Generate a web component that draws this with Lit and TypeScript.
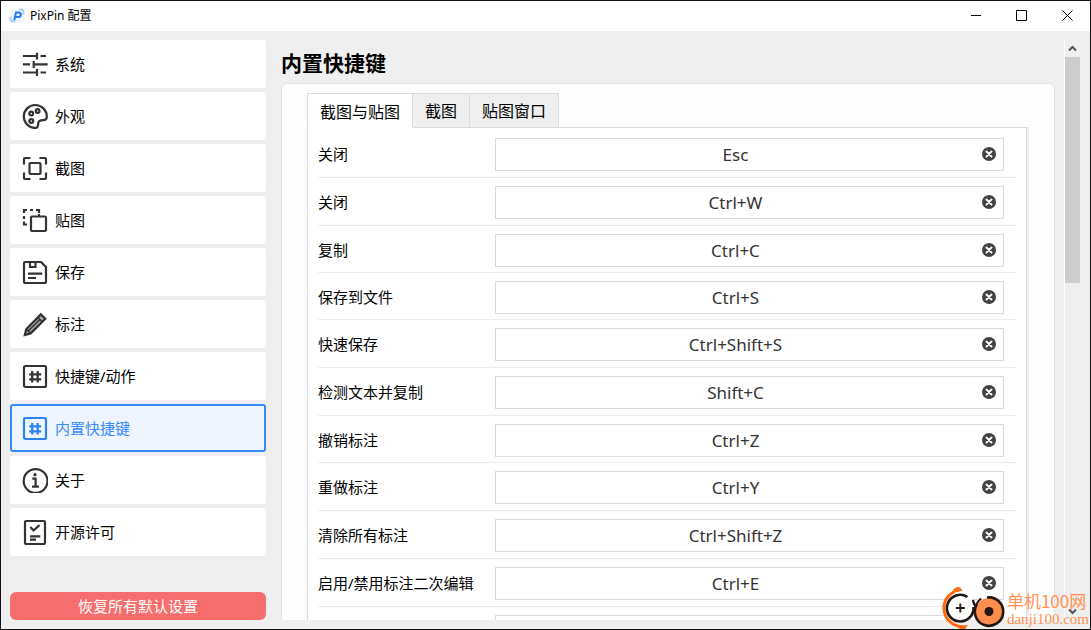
import { LitElement, html, css, svg, nothing, type TemplateResult } from "lit";
import { customElement, property, state } from "lit/decorators.js";
import { classMap } from "lit/directives/class-map.js";

const hash = svg`
  <rect x="2" y="3" width="22" height="21" rx="1.5"/>
  <path d="M10.2 8v11.5M15.7 8v11.5M7.2 11.3h12M7.2 16.4h12"/>`;

const ICONS: Record<string, TemplateResult> = {
  system: svg`<path d="M1 5h14M18.500 5h5.500M15 1.700v6.800M1 13.400h7M11.700 13.400h14M11.700 10v7M1 21.500h14M18.500 21.500h5.500M15 18v7"/>`,
  look: svg`
    <path d="M13.300 25A11.500 11.500 0 1 1 24.800 13.500c.1 2.500-.9 3.600-3.200 3.700l-2.600.1c-1.700.2-2.600 1.100-2.700 2.700l-.2 2.200c-.2 1.900-1.100 2.800-2.800 2.800z"/>
    <circle cx="9.200" cy="10.600" r="1.900"/><circle cx="15.600" cy="8" r="1.900"/><circle cx="9.300" cy="18" r="1.900"/>`,
  capture: svg`
    <path d="M8.500 3H3a1 1 0 0 0-1 1v5.500M17.500 3H23a1 1 0 0 1 1 1v5.500M8.500 24H3a1 1 0 0 1-1-1v-5.500M17.500 24H23a1 1 0 0 0 1-1v-5.500"/>
    <rect x="7.500" y="8" width="11" height="11" rx="1"/>`,
  pin: svg`
    <path d="M2 6V3h3M8 3h3M14 3h3v3M2 9v3M2 14.500v3h3M17 7v2"/>
    <rect x="9" y="9.500" width="15" height="14.500" rx="1"/>`,
  save: svg`
    <path d="M3.300 3H19l5 5v14.700a1.300 1.300 0 0 1-1.300 1.300H3.300A1.300 1.300 0 0 1 2 22.700V4.300A1.300 1.300 0 0 1 3.300 3zM8 3v5h5.500V3M6 14.700h14.200M6 19h8"/>`,
  mark: svg`
    <path fill="#aaa" d="M2.800 24l1.400-5.800L18.800 3.400l4.500 4.400L8.600 22.400z"/>
    <path stroke-width="1.600" d="M4.200 18.200l4.400 4.200M15.800 6.400l4.400 4.400M6.200 20L18 8.500"/>`,
  hotkey: hash,
  builtin: hash,
  about: svg`
    <circle cx="13.600" cy="14" r="11.900"/>
    <circle cx="13" cy="7.700" r="1.600" fill="currentColor" stroke="none"/>
    <path d="M10.300 11.700h3.300v8M10 19.700h7" />`,
  license: svg`
    <rect x="3" y="2" width="20" height="23" rx="1.200"/>
    <path d="M8.300 8l3.200 3.500 6-5.400M8 17.300h10.300M8 20.700h6"/>`,
};

const NAV: [string, string][] = [
  ["system", "系统"],
  ["look", "外观"],
  ["capture", "截图"],
  ["pin", "贴图"],
  ["save", "保存"],
  ["mark", "标注"],
  ["hotkey", "快捷键/动作"],
  ["builtin", "内置快捷键"],
  ["about", "关于"],
  ["license", "开源许可"],
];

const TABS = ["截图与贴图", "截图", "贴图窗口"];

const SHORTCUTS: [string, string][] = [
  ["关闭", "Esc"],
  ["关闭", "Ctrl+W"],
  ["复制", "Ctrl+C"],
  ["保存到文件", "Ctrl+S"],
  ["快速保存", "Ctrl+Shift+S"],
  ["检测文本并复制", "Shift+C"],
  ["撤销标注", "Ctrl+Z"],
  ["重做标注", "Ctrl+Y"],
  ["清除所有标注", "Ctrl+Shift+Z"],
  ["启用/禁用标注二次编辑", "Ctrl+E"],
  ["", ""],
];

@customElement("title-bar")
class TitleBar extends LitElement {
  static styles = css`
    :host { display: flex; align-items: center; height: 30px; background: #fff; flex: none; }
    .logo { width: 16px; height: 16px; margin: 0 5px 0 8px; }
    .name { flex: 1; font-size: 12px; line-height: 16px; color: #000; }
    .control { width: 46px; height: 30px; padding: 0 0 2px; border: 0; background: none; display: grid; place-items: center; }
    .control svg { width: 11px; height: 11px; fill: none; stroke: #000; }
  `;
  render() {
    return html`
      <svg class="logo" viewBox="0 0 16 16" fill="none" aria-hidden="true">
        <rect x="1" y="1" width="14" height="14" rx="3" fill="#f1f4fa"/>
        <path d="M10 1.500h2.500a2 2 0 0 1 2 2V7M1.500 9v2.500a2 2 0 0 0 2 2H6" stroke="#a9cdfb" stroke-width="1.800"/>
        <path d="M5.300 12.300L7 4.600h2.500a2.200 2.200 0 0 1 0 4.500H6.500" stroke="#1f7bf2" stroke-width="2"/>
      </svg>
      <span class="name">PixPin 配置</span>
      <button class="control" aria-label="最小化"><svg viewBox="0 0 11 11"><path d="M1 5.500h10"/></svg></button>
      <button class="control" aria-label="最大化"><svg viewBox="0 0 11 11"><path d="M.5.5h10v10h-10z"/></svg></button>
      <button class="control" aria-label="关闭"><svg viewBox="0 0 11 11"><path d="M.5.5l10 10M10.500.5l-10 10"/></svg></button>
    `;
  }
}

@customElement("side-nav")
class SideNav extends LitElement {
  @state() current = "builtin";
  static styles = css`
    :host { display: flex; flex-direction: column; width: 256px; flex: none; }
    .list { display: flex; flex-direction: column; gap: 4px; flex: 1; }
    .item {
      box-sizing: border-box; display: flex; align-items: center; gap: 7px; height: 48px; padding: 0 10px;
      border: 2px solid #fff; border-radius: 3px; background: #fff; color: #000;
      font: inherit; font-size: 15px; text-align: left;
    }
    .item span { padding-bottom: 2px; }
    .item.active { border-color: #3889fb; background: #eef5ff; color: #3889fb; }
    .icon { width: 26px; height: 26px; fill: none; stroke: currentColor; stroke-width: 2.2; color: #333; }
    .active .icon { color: #2a83ef; }
    .reset {
      height: 28px; padding: 0; border: 0; border-radius: 6px; background: #f66d6d; color: #fff;
      font: inherit; font-size: 15px; line-height: 28px;
    }
  `;
  render() {
    return html`
      <nav class="list">
        ${NAV.map(([id, label]) => html`
          <button class=${classMap({ item: true, active: id === this.current })}
            aria-current=${id === this.current ? "page" : nothing}
            @click=${() => (this.current = id)}>
            <svg class="icon" viewBox="0 0 26 26" aria-hidden="true">${ICONS[id]}</svg>
            <span>${label}</span>
          </button>`)}
      </nav>
      <button class="reset">恢复所有默认设置</button>
    `;
  }
}

@customElement("shortcut-row")
class ShortcutRow extends LitElement {
  @property() label = "";
  @property() keys = "";
  static styles = css`
    :host {
      box-sizing: border-box; display: flex; align-items: flex-start; height: 48px;
      padding: 8px 12px 0 0; border-bottom: 1px solid #ececec;
    }
    .label { width: 177px; flex: none; font-size: 15px; line-height: 33px; color: #000; }
    .field { box-sizing: border-box; flex: 1; display: flex; height: 33px; border: 1px solid #dadbdc; background: #fff; }
    .keys {
      flex: 1; min-width: 0; padding: 0; border: 0; outline: 0; background: none;
      font: inherit; font-size: 17px; color: #333; text-align: center;
    }
    .clear { width: 28px; padding: 0 0 2px; border: 0; background: none; display: grid; place-items: center; }
    .clear svg { width: 14px; height: 14px; }
  `;
  render() {
    return html`
      <label class="label" for="keys">${this.label}</label>
      <div class="field">
        <input class="keys" id="keys" type="text" readonly .value=${this.keys}>
        <button class="clear" aria-label="清除">
          <svg viewBox="0 0 14 14">
            <circle cx="7" cy="7" r="7" fill="#414345"/>
            <path d="M4.500 4.500l5 5M9.500 4.500l-5 5" stroke="#fff" stroke-width="1.900" stroke-linecap="round"/>
          </svg>
        </button>
      </div>
    `;
  }
}

@customElement("shortcut-page")
class ShortcutPage extends LitElement {
  @state() tab = 0;
  static styles = css`
    :host { display: flex; flex: 1; min-width: 0; min-height: 0; }
    .view { flex: 1; min-width: 0; overflow: hidden; padding-right: 9px; }
    .title { margin: 0; padding: 7px 0 4px; font-size: 21px; line-height: 32px; font-weight: 700; color: #000; }
    .card { padding: 9px 27px 9px 25px; border: 1px solid #e3e3e3; border-radius: 6px; background: #fdfdfd; }
    .tabs { display: flex; }
    .tab {
      box-sizing: border-box; height: 35px; padding: 0 12px 2px; border: 1px solid #dadbdc; border-left: 0;
      background: #efefef; color: #000; font: inherit; font-size: 16px;
    }
    .tab:first-child { border-left: 1px solid #dadbdc; }
    .tab.active { padding-bottom: 0; background: #fff; border-bottom-color: #fff; position: relative; z-index: 1; }
    .panel {
      margin-top: -1px; padding: 2px 10px 10px; border: 1px solid #dadbdc;
      background: #fff; box-shadow: 2px 0 #efefef;
    }
    .row:nth-child(4n + 3), .row:nth-child(4) { height: 47px; }
    .scroll { display: flex; flex-direction: column; width: 15px; flex: none; border-left: 1px solid #fff; }
    .arrow { height: 17px; padding: 0; border: 0; background: none; display: grid; place-items: center; }
    .arrow svg { width: 9px; height: 7px; fill: none; stroke: #555; stroke-width: 2; }
    .thumb { flex: 12; background: #cdcdcd; }
    .rest { flex: 17; }
  `;
  render() {
    return html`
      <main class="view">
        <h1 class="title">内置快捷键</h1>
        <section class="card">
          <div class="tabs" role="tablist">
            ${TABS.map((name, i) => html`
              <button role="tab" class=${classMap({ tab: true, active: i === this.tab })}
                aria-selected=${i === this.tab} @click=${() => (this.tab = i)}>${name}</button>`)}
          </div>
          <div class="panel" role="tabpanel">
            ${SHORTCUTS.map(([label, keys]) => html`
              <shortcut-row class="row" .label=${label} .keys=${keys}></shortcut-row>`)}
          </div>
        </section>
      </main>
      <div class="scroll">
        <button class="arrow" aria-label="向上滚动"><svg viewBox="0 0 9 7"><path d="M1 5.500l3.500-3.500L8 5.500"/></svg></button>
        <div class="thumb"></div>
        <div class="rest"></div>
        <button class="arrow" aria-label="向下滚动"><svg viewBox="0 0 9 7"><path d="M1 1.500l3.500 3.500L8 1.500"/></svg></button>
      </div>
    `;
  }
}

@customElement("site-mark")
class SiteMark extends LitElement {
  static styles = css`
    :host { display: flex; align-items: flex-end; color: #ff9253; pointer-events: none; }
    .badge { width: 66px; height: 42px; }
    .words { display: flex; flex-direction: column; padding-bottom: 1px; }
    .cn { font-family: "Noto Sans CJK SC", sans-serif; font-size: 17px; line-height: 20px; }
    .url { font-family: "Liberation Serif", serif; font-size: 15px; line-height: 17px; }
  `;
  render() {
    return html`
      <svg class="badge" viewBox="0 0 66 42" fill="none" aria-hidden="true">
        <path d="M22 3.500C12 0 1 9 1.500 21.500 2 34 12 41 22 41l5-3C14 40 4.500 32 4.500 21 4.500 12 11 5 22 3.500z" fill="#ff6a10"/>
        <path d="M11.500 3.500c4-4.500 7.500-4.500 9.500-.5l-4 2zM15 38.500c5 1 9 1 12-1l-3 4.500h-5z" fill="#ff6a10"/>
        <circle cx="19.300" cy="21" r="14.500" fill="#fff"/>
        <path d="M26.500 10A13.300 13.300 0 1 0 32.500 20" stroke="#231815" stroke-width="2.600"/>
        <path d="M19.300 16.500v9M14.800 21h9" stroke="#231815" stroke-width="1.800"/>
        <path d="M32 13c.5 4 1.500 5.500 3.500 7M35 18.500c1-3 2.500-5 5-7" stroke="#231815" stroke-width="2.200"/>
        <circle cx="48" cy="24.500" r="13.500" fill="#ff8d4b"/>
        <path d="M46 10.500A14.200 14.200 0 1 1 36 17" stroke="#231815" stroke-width="2.600"/>
        <circle cx="48" cy="24.500" r="4.500" fill="#231815"/>
      </svg>
      <div class="words"><span class="cn">单机100网</span><span class="url">danji100.com</span></div>
    `;
  }
}

@customElement("app-root")
class AppRoot extends LitElement {
  static styles = css`
    :host {
      box-sizing: border-box; position: relative; display: flex; flex-direction: column; height: 100vh;
      border: 1px solid #111; background: #efefef; overflow: hidden;
      font-family: "Noto Sans", "Noto Sans CJK SC", sans-serif;
    }
    .body { flex: 1; min-height: 0; display: flex; gap: 15px; padding: 9px 10px 9px 9px; }
    .mark { position: absolute; right: 1px; bottom: 0; }
  `;
  render() {
    return html`
      <title-bar></title-bar>
      <div class="body">
        <side-nav></side-nav>
        <shortcut-page></shortcut-page>
      </div>
      <site-mark class="mark"></site-mark>
    `;
  }
}
